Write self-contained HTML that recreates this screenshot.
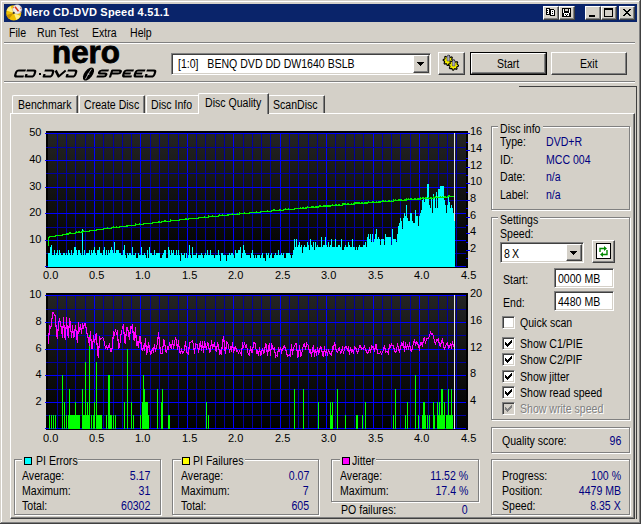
<!DOCTYPE html><html><head><meta charset="utf-8"><style>
html,body{margin:0;padding:0;width:641px;height:524px;overflow:hidden;background:#d4d0c8}
body>div,body>span,body>svg{position:absolute;box-sizing:border-box}
.t{font-family:"Liberation Sans",sans-serif;font-size:12px;line-height:13px;white-space:nowrap;color:#000;transform:scaleX(0.88);transform-origin:0 0}
.r{transform-origin:100% 0}
svg{overflow:visible}
</style></head><body>
<div style="left:0px;top:0px;width:641px;height:524px;background:#d4d0c8;"></div>
<div style="left:0px;top:0px;width:640px;height:1px;background:#d4d0c8;"></div>
<div style="left:0px;top:0px;width:1px;height:523px;background:#d4d0c8;"></div>
<div style="left:1px;top:1px;width:638px;height:1px;background:#ffffff;"></div>
<div style="left:1px;top:1px;width:1px;height:521px;background:#ffffff;"></div>
<div style="left:0px;top:523px;width:641px;height:1px;background:#404040;"></div>
<div style="left:640px;top:0px;width:1px;height:524px;background:#404040;"></div>
<div style="left:1px;top:522px;width:639px;height:1px;background:#808080;"></div>
<div style="left:639px;top:1px;width:1px;height:522px;background:#808080;"></div>
<div style="left:4px;top:4px;width:633px;height:18px;background:#0a246a;"></div>
<svg style="left:6px;top:5px" width="16" height="16" viewBox="0 0 16 16">
<circle cx="7.75" cy="7.9" r="7.6" fill="#f0c000"/>
<path d="M7.75 7.9 L0.5 5.5 A7.6 7.6 0 0 1 4.5 1 Z" fill="#fff080"/>
<path d="M7.75 7.9 L14.5 11 A7.6 7.6 0 0 1 10.5 15 Z" fill="#fff080"/>
<path d="M7.75 7.9 L3 14 A7.6 7.6 0 0 1 0.5 10 Z" fill="#c89000"/>
<circle cx="11.2" cy="4.3" r="4.6" fill="#ececec" stroke="#c0c0c0" stroke-width="0.5"/>
<path d="M9 1.8 L12.5 6.2" stroke="#e03010" stroke-width="1.5"/>
<circle cx="7.4" cy="2.6" r="0.6" fill="#e06040"/><circle cx="14.6" cy="3.2" r="0.6" fill="#e06040"/><circle cx="14.2" cy="6.8" r="0.6" fill="#e06040"/>
<circle cx="7.75" cy="7.9" r="1.1" fill="#3a3a3a"/>
</svg>
<span class="t" style="left:24px;top:6px;color:#fff;font-weight:bold;letter-spacing:0.2px;font-size:11px;transform:none">Nero CD-DVD Speed 4.51.1</span>
<div style="left:543px;top:6px;width:16px;height:14px;background:#d4d0c8;border:1px solid;border-color:#ffffff #404040 #404040 #ffffff;box-shadow:inset -1px -1px #808080;"></div>
<svg style="left:543px;top:6px" width="16" height="14" viewBox="0 0 16 14" shape-rendering="crispEdges"><path d="M3 2h4v1h1v6h-5z" fill="#000"/><rect x="4" y="3" width="2" height="5" fill="#fff"/><rect x="4" y="4" width="1" height="1" fill="#000"/><rect x="4" y="6" width="1" height="1" fill="#000"/><path d="M7 3h4v1h1v6h-5z" fill="#000"/><rect x="8" y="4" width="3" height="5" fill="#fff"/><rect x="9" y="5" width="1" height="1" fill="#000"/><rect x="9" y="7" width="1" height="1" fill="#000"/></svg>
<div style="left:559px;top:6px;width:16px;height:14px;background:#d4d0c8;border:1px solid;border-color:#ffffff #404040 #404040 #ffffff;box-shadow:inset -1px -1px #808080;"></div>
<svg style="left:559px;top:6px" width="16" height="14" viewBox="0 0 16 14" shape-rendering="crispEdges"><rect x="3" y="2" width="9" height="9" fill="#000"/><rect x="4" y="3" width="1" height="4" fill="#fff"/><rect x="10" y="3" width="1" height="4" fill="#fff"/><rect x="6" y="3" width="3" height="2" fill="#d4d0c8"/><rect x="5" y="7" width="5" height="3" fill="#fff"/><rect x="6" y="8" width="1" height="1" fill="#000"/><rect x="8" y="8" width="1" height="1" fill="#000"/><rect x="7" y="9" width="1" height="1" fill="#000"/></svg>
<div style="left:585px;top:6px;width:16px;height:14px;background:#d4d0c8;border:1px solid;border-color:#ffffff #404040 #404040 #ffffff;box-shadow:inset -1px -1px #808080;"></div>
<svg style="left:585px;top:6px" width="16" height="14" viewBox="0 0 16 14" shape-rendering="crispEdges"><rect x="4" y="9" width="6" height="2" fill="#000"/></svg>
<div style="left:601px;top:6px;width:16px;height:14px;background:#d4d0c8;border:1px solid;border-color:#ffffff #404040 #404040 #ffffff;box-shadow:inset -1px -1px #808080;"></div>
<svg style="left:601px;top:6px" width="16" height="14" viewBox="0 0 16 14" shape-rendering="crispEdges"><path d="M3 2h9v9h-9z M4 4v6h7v-6z" fill="#000" fill-rule="evenodd"/></svg>
<div style="left:619px;top:6px;width:16px;height:14px;background:#d4d0c8;border:1px solid;border-color:#ffffff #404040 #404040 #ffffff;box-shadow:inset -1px -1px #808080;"></div>
<svg style="left:619px;top:6px" width="16" height="14" viewBox="0 0 16 14" shape-rendering="crispEdges"><path d="M4 3h2v1h1v1h2v-1h1v-1h2v1h-1v1h-1v1h-1v1h1v1h1v1h1v1h-2v-1h-1v-1h-2v1h-1v1h-2v-1h1v-1h1v-1h1v-1h-1v-1h-1v-1h-1z" fill="#000"/></svg>
<span class="t" style="left:9px;top:27px;">File</span>
<span class="t" style="left:37px;top:27px;">Run Test</span>
<span class="t" style="left:92px;top:27px;">Extra</span>
<span class="t" style="left:130px;top:27px;">Help</span>
<div style="left:4px;top:42px;width:631px;height:1px;background:#808080;"></div>
<div style="left:4px;top:43px;width:631px;height:1px;background:#ffffff;"></div>
<div style="left:4px;top:81px;width:631px;height:1px;background:#808080;"></div>
<div style="left:4px;top:82px;width:631px;height:1px;background:#ffffff;"></div>
<svg style="left:0;top:0" width="641" height="100"><text x="52" y="62.6" font-family="Liberation Sans" font-weight="bold" font-size="30.5" textLength="68" lengthAdjust="spacingAndGlyphs" stroke="#000" stroke-width="0.8">nero</text></svg>
<svg style="left:0;top:0" width="641" height="100"><path transform="translate(16 69.5) skewX(-18)" d="M10 1H3Q1 1 1 3V5Q1 7 3 7H10" fill="none" stroke="#000" stroke-width="2.2" stroke-linejoin="round"/><path transform="translate(27 69.5) skewX(-18)" d="M0 1H7Q9 1 9 3V5Q9 7 7 7H1V4.5" fill="none" stroke="#000" stroke-width="2.2" stroke-linejoin="round"/><path transform="translate(45 69.5) skewX(-18)" d="M0 1H7Q9 1 9 3V5Q9 7 7 7H1V4.5" fill="none" stroke="#000" stroke-width="2.2" stroke-linejoin="round"/><path transform="translate(56 69.5) skewX(-18)" d="M0 1L5 7L10 1" fill="none" stroke="#000" stroke-width="2.2" stroke-linejoin="round"/><path transform="translate(68 69.5) skewX(-18)" d="M0 1H7Q9 1 9 3V5Q9 7 7 7H1V4.5" fill="none" stroke="#000" stroke-width="2.2" stroke-linejoin="round"/><path transform="translate(99 69.5) skewX(-18)" d="M10 1H3Q1 1 1 2.5Q1 4 3 4H7Q9 4 9 5.5Q9 7 7 7H0" fill="none" stroke="#000" stroke-width="2.2" stroke-linejoin="round"/><path transform="translate(111.5 69.5) skewX(-18)" d="M1 8V1H8Q10 1 10 2.5Q10 4 8 4H2" fill="none" stroke="#000" stroke-width="2.2" stroke-linejoin="round"/><path transform="translate(124 69.5) skewX(-18)" d="M10 1H3Q1 1 1 3V5Q1 7 3 7H10M2 4H8" fill="none" stroke="#000" stroke-width="2.2" stroke-linejoin="round"/><path transform="translate(135.5 69.5) skewX(-18)" d="M10 1H3Q1 1 1 3V5Q1 7 3 7H10M2 4H8" fill="none" stroke="#000" stroke-width="2.2" stroke-linejoin="round"/><path transform="translate(147 69.5) skewX(-18)" d="M0 1H7Q9 1 9 3V5Q9 7 7 7H1V4.5" fill="none" stroke="#000" stroke-width="2.2" stroke-linejoin="round"/><rect x="39" y="73" width="2" height="2" fill="#000"/><g transform="translate(88.5 74) rotate(-52)"><ellipse cx="0" cy="0" rx="7.5" ry="4" fill="#000"/><path d="M-6 0.8 Q0 -0.5 6 -0.8" stroke="#b0b0b0" stroke-width="0.9" fill="none"/><circle cx="0" cy="0" r="1" fill="#b0b0b0"/></g></svg>
<div style="left:171px;top:53px;width:260px;height:22px;background:#ffffff;border:1px solid;border-color:#808080 #ffffff #ffffff #808080;box-shadow:inset 1px 1px #404040, inset -1px -1px #d4d0c8;"></div>
<span class="t" style="left:178px;top:58px;">[1:0]&nbsp;&nbsp;&nbsp;BENQ DVD DD DW1640 BSLB</span>
<div style="left:413px;top:55px;width:16px;height:18px;background:#d4d0c8;border:1px solid;border-color:#ffffff #404040 #404040 #ffffff;box-shadow:inset -1px -1px #808080;"></div>
<svg style="left:413px;top:55px" width="16" height="18" shape-rendering="crispEdges"><path d="M4 7h7v1h-1v1h-1v1h-1v1h-1v-1h-1v-1h-1v-1h-1z" fill="#000"/></svg>
<div style="left:438px;top:52px;width:27px;height:23px;background:#d4d0c8;border:1px solid;border-color:#ffffff #404040 #404040 #ffffff;box-shadow:inset -1px -1px #808080;"></div>
<svg style="left:0;top:0" width="641" height="100">
<path d="M453.20,60.50 L453.10,61.48 L451.71,61.95 L451.36,62.61 L451.74,64.04 L450.98,64.66 L449.65,64.01 L448.94,64.23 L448.20,65.50 L447.22,65.40 L446.75,64.01 L446.09,63.66 L444.66,64.04 L444.04,63.28 L444.69,61.95 L444.47,61.24 L443.20,60.50 L443.30,59.52 L444.69,59.05 L445.04,58.39 L444.66,56.96 L445.42,56.34 L446.75,56.99 L447.46,56.77 L448.20,55.50 L449.18,55.60 L449.65,56.99 L450.31,57.34 L451.74,56.96 L452.36,57.72 L451.71,59.05 L451.93,59.76Z" fill="#f8f000" stroke="#000" stroke-width="1.1"/>
<path d="M458.50,65.20 L458.40,66.18 L457.01,66.65 L456.66,67.31 L457.04,68.74 L456.28,69.36 L454.95,68.71 L454.24,68.93 L453.50,70.20 L452.52,70.10 L452.05,68.71 L451.39,68.36 L449.96,68.74 L449.34,67.98 L449.99,66.65 L449.77,65.94 L448.50,65.20 L448.60,64.22 L449.99,63.75 L450.34,63.09 L449.96,61.66 L450.72,61.04 L452.05,61.69 L452.76,61.47 L453.50,60.20 L454.48,60.30 L454.95,61.69 L455.61,62.04 L457.04,61.66 L457.66,62.42 L457.01,63.75 L457.23,64.46Z" fill="#f8f000" stroke="#000" stroke-width="1.1"/>
<path d="M447 61V56.5l1.3-1.8 1.3 1.8V61z" fill="#a8a8c0" stroke="#303040" stroke-width="0.5"/>
<path d="M452.3 66V61.3l1.3-1.8 1.3 1.8V66z" fill="#a8a8c0" stroke="#303040" stroke-width="0.5"/>
</svg>
<div style="left:470px;top:52px;width:77px;height:23px;border:1px solid #000"></div>
<div style="left:471px;top:53px;width:75px;height:21px;background:#d4d0c8;border:1px solid;border-color:#ffffff #404040 #404040 #ffffff;box-shadow:inset -1px -1px #808080;"></div>
<span class="t" style="left:497px;top:58px;">Start</span>
<div style="left:551px;top:52px;width:76px;height:23px;background:#d4d0c8;border:1px solid;border-color:#ffffff #404040 #404040 #ffffff;box-shadow:inset -1px -1px #808080;"></div>
<span class="t" style="left:580px;top:58px;">Exit</span>
<div style="left:519px;top:86px;width:118px;height:1px;background:#404040;"></div>
<div style="left:636px;top:86px;width:1px;height:433px;background:#404040;"></div>
<div style="left:10px;top:113px;width:625px;height:406px;background:#d4d0c8;border:1px solid;border-color:#ffffff #404040 #404040 #ffffff;box-shadow:inset -1px -1px #808080;"></div>
<div style="left:12px;top:95px;width:66px;height:18px;background:#d4d0c8;border-left:1px solid #ffffff;border-top:1px solid #ffffff;border-right:1px solid #404040;box-shadow:inset -1px 0 #808080;border-top-left-radius:2px;border-top-right-radius:1px"></div>
<span class="t" style="left:18px;top:99px;">Benchmark</span>
<div style="left:79px;top:95px;width:66px;height:18px;background:#d4d0c8;border-left:1px solid #ffffff;border-top:1px solid #ffffff;border-right:1px solid #404040;box-shadow:inset -1px 0 #808080;border-top-left-radius:2px;border-top-right-radius:1px"></div>
<span class="t" style="left:84px;top:99px;">Create Disc</span>
<div style="left:146px;top:95px;width:54px;height:18px;background:#d4d0c8;border-left:1px solid #ffffff;border-top:1px solid #ffffff;border-right:1px solid #404040;box-shadow:inset -1px 0 #808080;border-top-left-radius:2px;border-top-right-radius:1px"></div>
<span class="t" style="left:151px;top:99px;">Disc Info</span>
<div style="left:268px;top:95px;width:57px;height:18px;background:#d4d0c8;border-left:1px solid #ffffff;border-top:1px solid #ffffff;border-right:1px solid #404040;box-shadow:inset -1px 0 #808080;border-top-left-radius:2px;border-top-right-radius:1px"></div>
<span class="t" style="left:273px;top:99px;">ScanDisc</span>
<div style="left:198px;top:93px;width:71px;height:21px;background:#d4d0c8;border-left:1px solid #ffffff;border-top:1px solid #ffffff;border-right:1px solid #404040;box-shadow:inset -1px 0 #808080;border-top-left-radius:2px;border-top-right-radius:1px"></div>
<span class="t" style="left:205px;top:97px;">Disc Quality</span>
<svg style="left:0;top:0" width="641" height="524" shape-rendering="crispEdges"><defs><linearGradient id="bg" x1="0" y1="0" x2="0" y2="1"><stop offset="0" stop-color="#242424"/><stop offset="0.5" stop-color="#101010"/><stop offset="1" stop-color="#000"/></linearGradient></defs><rect x="46" y="131" width="422" height="137" fill="#000"/><rect x="48" y="133" width="418" height="134" fill="url(#bg)"/><rect x="57" y="133" width="1" height="134" fill="#0000a0"/><rect x="66" y="133" width="1" height="134" fill="#0000a0"/><rect x="75" y="133" width="1" height="134" fill="#0000a0"/><rect x="85" y="133" width="1" height="134" fill="#0000a0"/><rect x="94" y="133" width="1" height="134" fill="#0000ff"/><rect x="103" y="133" width="1" height="134" fill="#0000a0"/><rect x="113" y="133" width="1" height="134" fill="#0000a0"/><rect x="122" y="133" width="1" height="134" fill="#0000a0"/><rect x="131" y="133" width="1" height="134" fill="#0000a0"/><rect x="140" y="133" width="1" height="134" fill="#0000ff"/><rect x="150" y="133" width="1" height="134" fill="#0000a0"/><rect x="159" y="133" width="1" height="134" fill="#0000a0"/><rect x="168" y="133" width="1" height="134" fill="#0000a0"/><rect x="178" y="133" width="1" height="134" fill="#0000a0"/><rect x="187" y="133" width="1" height="134" fill="#0000ff"/><rect x="196" y="133" width="1" height="134" fill="#0000a0"/><rect x="205" y="133" width="1" height="134" fill="#0000a0"/><rect x="215" y="133" width="1" height="134" fill="#0000a0"/><rect x="224" y="133" width="1" height="134" fill="#0000a0"/><rect x="233" y="133" width="1" height="134" fill="#0000ff"/><rect x="243" y="133" width="1" height="134" fill="#0000a0"/><rect x="252" y="133" width="1" height="134" fill="#0000a0"/><rect x="261" y="133" width="1" height="134" fill="#0000a0"/><rect x="270" y="133" width="1" height="134" fill="#0000a0"/><rect x="280" y="133" width="1" height="134" fill="#0000ff"/><rect x="289" y="133" width="1" height="134" fill="#0000a0"/><rect x="298" y="133" width="1" height="134" fill="#0000a0"/><rect x="308" y="133" width="1" height="134" fill="#0000a0"/><rect x="317" y="133" width="1" height="134" fill="#0000a0"/><rect x="326" y="133" width="1" height="134" fill="#0000ff"/><rect x="335" y="133" width="1" height="134" fill="#0000a0"/><rect x="345" y="133" width="1" height="134" fill="#0000a0"/><rect x="354" y="133" width="1" height="134" fill="#0000a0"/><rect x="363" y="133" width="1" height="134" fill="#0000a0"/><rect x="373" y="133" width="1" height="134" fill="#0000ff"/><rect x="382" y="133" width="1" height="134" fill="#0000a0"/><rect x="391" y="133" width="1" height="134" fill="#0000a0"/><rect x="400" y="133" width="1" height="134" fill="#0000a0"/><rect x="410" y="133" width="1" height="134" fill="#0000a0"/><rect x="419" y="133" width="1" height="134" fill="#0000ff"/><rect x="428" y="133" width="1" height="134" fill="#0000a0"/><rect x="438" y="133" width="1" height="134" fill="#0000a0"/><rect x="447" y="133" width="1" height="134" fill="#0000a0"/><rect x="456" y="133" width="1" height="134" fill="#0000a0"/><rect x="45" y="266" width="421" height="1" fill="#0000ff"/><rect x="46" y="253" width="420" height="1" fill="#0000a0"/><rect x="45" y="240" width="421" height="1" fill="#0000ff"/><rect x="46" y="227" width="420" height="1" fill="#0000a0"/><rect x="45" y="213" width="421" height="1" fill="#0000ff"/><rect x="46" y="200" width="420" height="1" fill="#0000a0"/><rect x="45" y="187" width="421" height="1" fill="#0000ff"/><rect x="46" y="173" width="420" height="1" fill="#0000a0"/><rect x="45" y="160" width="421" height="1" fill="#0000ff"/><rect x="46" y="147" width="420" height="1" fill="#0000a0"/><rect x="45" y="133" width="421" height="1" fill="#0000ff"/><rect x="466" y="258" width="2" height="1" fill="#0000ff"/><rect x="466" y="250" width="4" height="1" fill="#0000ff"/><rect x="466" y="242" width="2" height="1" fill="#0000ff"/><rect x="466" y="233" width="4" height="1" fill="#0000ff"/><rect x="466" y="225" width="2" height="1" fill="#0000ff"/><rect x="466" y="217" width="4" height="1" fill="#0000ff"/><rect x="466" y="208" width="2" height="1" fill="#0000ff"/><rect x="466" y="200" width="4" height="1" fill="#0000ff"/><rect x="466" y="192" width="2" height="1" fill="#0000ff"/><rect x="466" y="183" width="4" height="1" fill="#0000ff"/><rect x="466" y="175" width="2" height="1" fill="#0000ff"/><rect x="466" y="167" width="4" height="1" fill="#0000ff"/><rect x="466" y="158" width="2" height="1" fill="#0000ff"/><rect x="466" y="150" width="4" height="1" fill="#0000ff"/><rect x="466" y="142" width="2" height="1" fill="#0000ff"/><rect x="466" y="133" width="4" height="1" fill="#0000ff"/><rect x="454" y="133" width="1" height="134" fill="#e8e8e8"/><path d="M48 252.7V267h1V252.7zM49 252.7V267h1V252.7zM50 247.4V267h1V247.4zM51 244.7V267h1V244.7zM52 255.4V267h1V255.4zM53 255.4V267h1V255.4zM54 250.0V267h1V250.0zM55 255.4V267h1V255.4zM56 252.7V267h1V252.7zM57 250.0V267h1V250.0zM58 255.4V267h1V255.4zM59 250.0V267h1V250.0zM60 252.7V267h1V252.7zM61 255.4V267h1V255.4zM62 255.4V267h1V255.4zM63 252.7V267h1V252.7zM64 252.7V267h1V252.7zM65 255.4V267h1V255.4zM66 252.7V267h1V252.7zM67 255.4V267h1V255.4zM68 250.0V267h1V250.0zM69 252.7V267h1V252.7zM70 255.4V267h1V255.4zM71 250.0V267h1V250.0zM72 255.4V267h1V255.4zM73 252.7V267h1V252.7zM74 247.4V267h1V247.4zM75 247.4V267h1V247.4zM76 250.0V267h1V250.0zM77 255.4V267h1V255.4zM78 250.0V267h1V250.0zM79 250.0V267h1V250.0zM80 252.7V267h1V252.7zM81 255.4V267h1V255.4zM82 228.8V267h1V228.8zM83 255.4V267h1V255.4zM84 250.0V267h1V250.0zM85 255.4V267h1V255.4zM86 252.7V267h1V252.7zM87 252.7V267h1V252.7zM88 252.7V267h1V252.7zM89 250.0V267h1V250.0zM90 255.4V267h1V255.4zM91 250.0V267h1V250.0zM92 252.7V267h1V252.7zM93 250.0V267h1V250.0zM94 247.4V267h1V247.4zM95 252.7V267h1V252.7zM96 255.4V267h1V255.4zM97 250.0V267h1V250.0zM98 250.0V267h1V250.0zM99 247.4V267h1V247.4zM100 252.7V267h1V252.7zM101 252.7V267h1V252.7zM102 255.4V267h1V255.4zM103 250.0V267h1V250.0zM104 247.4V267h1V247.4zM105 255.4V267h1V255.4zM106 250.0V267h1V250.0zM107 255.4V267h1V255.4zM108 250.0V267h1V250.0zM109 252.7V267h1V252.7zM110 250.0V267h1V250.0zM111 247.4V267h1V247.4zM112 250.0V267h1V250.0zM113 252.7V267h1V252.7zM114 242.1V267h1V242.1zM115 252.7V267h1V252.7zM116 250.0V267h1V250.0zM117 250.0V267h1V250.0zM118 250.0V267h1V250.0zM119 252.7V267h1V252.7zM120 252.7V267h1V252.7zM121 255.4V267h1V255.4zM122 255.4V267h1V255.4zM123 250.0V267h1V250.0zM124 244.7V267h1V244.7zM125 255.4V267h1V255.4zM126 258.0V267h1V258.0zM127 252.7V267h1V252.7zM128 255.4V267h1V255.4zM129 252.7V267h1V252.7zM130 252.7V267h1V252.7zM131 255.4V267h1V255.4zM132 247.4V267h1V247.4zM133 255.4V267h1V255.4zM134 255.4V267h1V255.4zM135 252.7V267h1V252.7zM136 258.0V267h1V258.0zM137 258.0V267h1V258.0zM138 252.7V267h1V252.7zM139 255.4V267h1V255.4zM140 255.4V267h1V255.4zM141 247.4V267h1V247.4zM142 255.4V267h1V255.4zM143 255.4V267h1V255.4zM144 252.7V267h1V252.7zM145 255.4V267h1V255.4zM146 258.0V267h1V258.0zM147 250.0V267h1V250.0zM148 258.0V267h1V258.0zM149 247.4V267h1V247.4zM150 252.7V267h1V252.7zM151 252.7V267h1V252.7zM152 255.4V267h1V255.4zM153 255.4V267h1V255.4zM154 250.0V267h1V250.0zM155 255.4V267h1V255.4zM156 252.7V267h1V252.7zM157 252.7V267h1V252.7zM158 252.7V267h1V252.7zM159 252.7V267h1V252.7zM160 258.0V267h1V258.0zM161 258.0V267h1V258.0zM162 255.4V267h1V255.4zM163 252.7V267h1V252.7zM164 250.0V267h1V250.0zM165 250.0V267h1V250.0zM166 258.0V267h1V258.0zM167 258.0V267h1V258.0zM168 247.4V267h1V247.4zM169 250.0V267h1V250.0zM170 255.4V267h1V255.4zM171 250.0V267h1V250.0zM172 252.7V267h1V252.7zM173 250.0V267h1V250.0zM174 255.4V267h1V255.4zM175 255.4V267h1V255.4zM176 250.0V267h1V250.0zM177 255.4V267h1V255.4zM178 250.0V267h1V250.0zM179 255.4V267h1V255.4zM180 260.7V267h1V260.7zM181 252.7V267h1V252.7zM182 255.4V267h1V255.4zM183 255.4V267h1V255.4zM184 252.7V267h1V252.7zM185 258.0V267h1V258.0zM186 252.7V267h1V252.7zM187 258.0V267h1V258.0zM188 255.4V267h1V255.4zM189 244.7V267h1V244.7zM190 255.4V267h1V255.4zM191 258.0V267h1V258.0zM192 247.4V267h1V247.4zM193 255.4V267h1V255.4zM194 255.4V267h1V255.4zM195 255.4V267h1V255.4zM196 252.7V267h1V252.7zM197 258.0V267h1V258.0zM198 255.4V267h1V255.4zM199 255.4V267h1V255.4zM200 255.4V267h1V255.4zM201 252.7V267h1V252.7zM202 255.4V267h1V255.4zM203 258.0V267h1V258.0zM204 255.4V267h1V255.4zM205 252.7V267h1V252.7zM206 255.4V267h1V255.4zM207 250.0V267h1V250.0zM208 255.4V267h1V255.4zM209 255.4V267h1V255.4zM210 250.0V267h1V250.0zM211 255.4V267h1V255.4zM212 255.4V267h1V255.4zM213 255.4V267h1V255.4zM214 258.0V267h1V258.0zM215 255.4V267h1V255.4zM216 255.4V267h1V255.4zM217 255.4V267h1V255.4zM218 250.0V267h1V250.0zM219 255.4V267h1V255.4zM220 260.7V267h1V260.7zM221 252.7V267h1V252.7zM222 252.7V267h1V252.7zM223 255.4V267h1V255.4zM224 255.4V267h1V255.4zM225 255.4V267h1V255.4zM226 260.7V267h1V260.7zM227 255.4V267h1V255.4zM228 255.4V267h1V255.4zM229 252.7V267h1V252.7zM230 255.4V267h1V255.4zM231 252.7V267h1V252.7zM232 252.7V267h1V252.7zM233 255.4V267h1V255.4zM234 258.0V267h1V258.0zM235 250.0V267h1V250.0zM236 252.7V267h1V252.7zM237 252.7V267h1V252.7zM238 250.0V267h1V250.0zM239 250.0V267h1V250.0zM240 247.4V267h1V247.4zM241 258.0V267h1V258.0zM242 252.7V267h1V252.7zM243 244.7V267h1V244.7zM244 250.0V267h1V250.0zM245 252.7V267h1V252.7zM246 255.4V267h1V255.4zM247 255.4V267h1V255.4zM248 255.4V267h1V255.4zM249 255.4V267h1V255.4zM250 258.0V267h1V258.0zM251 252.7V267h1V252.7zM252 250.0V267h1V250.0zM253 255.4V267h1V255.4zM254 258.0V267h1V258.0zM255 255.4V267h1V255.4zM256 258.0V267h1V258.0zM257 255.4V267h1V255.4zM258 255.4V267h1V255.4zM259 255.4V267h1V255.4zM260 258.0V267h1V258.0zM261 255.4V267h1V255.4zM262 252.7V267h1V252.7zM263 258.0V267h1V258.0zM264 258.0V267h1V258.0zM265 260.7V267h1V260.7zM266 252.7V267h1V252.7zM267 255.4V267h1V255.4zM268 252.7V267h1V252.7zM269 258.0V267h1V258.0zM270 255.4V267h1V255.4zM271 252.7V267h1V252.7zM272 258.0V267h1V258.0zM273 258.0V267h1V258.0zM274 255.4V267h1V255.4zM275 252.7V267h1V252.7zM276 255.4V267h1V255.4zM277 255.4V267h1V255.4zM278 250.0V267h1V250.0zM279 255.4V267h1V255.4zM280 255.4V267h1V255.4zM281 252.7V267h1V252.7zM282 255.4V267h1V255.4zM283 252.7V267h1V252.7zM284 258.0V267h1V258.0zM285 258.0V267h1V258.0zM286 252.7V267h1V252.7zM287 252.7V267h1V252.7zM288 252.7V267h1V252.7zM289 252.7V267h1V252.7zM290 255.4V267h1V255.4zM291 258.0V267h1V258.0zM292 255.4V267h1V255.4zM293 250.0V267h1V250.0zM294 239.4V267h1V239.4zM295 247.4V267h1V247.4zM296 239.4V267h1V239.4zM297 247.4V267h1V247.4zM298 244.7V267h1V244.7zM299 242.1V267h1V242.1zM300 247.4V267h1V247.4zM301 244.7V267h1V244.7zM302 252.7V267h1V252.7zM303 247.4V267h1V247.4zM304 244.7V267h1V244.7zM305 247.4V267h1V247.4zM306 247.4V267h1V247.4zM307 242.1V267h1V242.1zM308 244.7V267h1V244.7zM309 250.0V267h1V250.0zM310 239.4V267h1V239.4zM311 244.7V267h1V244.7zM312 247.4V267h1V247.4zM313 242.1V267h1V242.1zM314 250.0V267h1V250.0zM315 242.1V267h1V242.1zM316 247.4V267h1V247.4zM317 244.7V267h1V244.7zM318 247.4V267h1V247.4zM319 247.4V267h1V247.4zM320 247.4V267h1V247.4zM321 236.7V267h1V236.7zM322 247.4V267h1V247.4zM323 244.7V267h1V244.7zM324 244.7V267h1V244.7zM325 236.7V267h1V236.7zM326 244.7V267h1V244.7zM327 247.4V267h1V247.4zM328 242.1V267h1V242.1zM329 247.4V267h1V247.4zM330 244.7V267h1V244.7zM331 239.4V267h1V239.4zM332 247.4V267h1V247.4zM333 247.4V267h1V247.4zM334 247.4V267h1V247.4zM335 239.4V267h1V239.4zM336 247.4V267h1V247.4zM337 247.4V267h1V247.4zM338 244.7V267h1V244.7zM339 244.7V267h1V244.7zM340 247.4V267h1V247.4zM341 239.4V267h1V239.4zM342 250.0V267h1V250.0zM343 250.0V267h1V250.0zM344 247.4V267h1V247.4zM345 244.7V267h1V244.7zM346 247.4V267h1V247.4zM347 247.4V267h1V247.4zM348 242.1V267h1V242.1zM349 244.7V267h1V244.7zM350 247.4V267h1V247.4zM351 247.4V267h1V247.4zM352 239.4V267h1V239.4zM353 247.4V267h1V247.4zM354 247.4V267h1V247.4zM355 250.0V267h1V250.0zM356 247.4V267h1V247.4zM357 250.0V267h1V250.0zM358 247.4V267h1V247.4zM359 244.7V267h1V244.7zM360 247.4V267h1V247.4zM361 247.4V267h1V247.4zM362 247.4V267h1V247.4zM363 244.7V267h1V244.7zM364 244.7V267h1V244.7zM365 242.1V267h1V242.1zM366 247.4V267h1V247.4zM367 236.7V267h1V236.7zM368 234.1V267h1V234.1zM369 239.4V267h1V239.4zM370 234.1V267h1V234.1zM371 242.1V267h1V242.1zM372 234.1V267h1V234.1zM373 242.1V267h1V242.1zM374 239.4V267h1V239.4zM375 234.1V267h1V234.1zM376 228.8V267h1V228.8zM377 239.4V267h1V239.4zM378 236.7V267h1V236.7zM379 239.4V267h1V239.4zM380 244.7V267h1V244.7zM381 239.4V267h1V239.4zM382 239.4V267h1V239.4zM383 239.4V267h1V239.4zM384 244.7V267h1V244.7zM385 234.1V267h1V234.1zM386 236.7V267h1V236.7zM387 236.7V267h1V236.7zM388 236.7V267h1V236.7zM389 236.7V267h1V236.7zM390 236.7V267h1V236.7zM391 244.7V267h1V244.7zM392 228.8V267h1V228.8zM393 239.4V267h1V239.4zM394 239.4V267h1V239.4zM395 239.4V267h1V239.4zM396 242.1V267h1V242.1zM397 234.1V267h1V234.1zM398 226.1V267h1V226.1zM399 223.4V267h1V223.4zM400 218.1V267h1V218.1zM401 220.8V267h1V220.8zM402 228.8V267h1V228.8zM403 218.1V267h1V218.1zM404 212.8V267h1V212.8zM405 215.5V267h1V215.5zM406 204.8V267h1V204.8zM407 218.1V267h1V218.1zM408 220.8V267h1V220.8zM409 220.8V267h1V220.8zM410 212.8V267h1V212.8zM411 212.8V267h1V212.8zM412 220.8V267h1V220.8zM413 223.4V267h1V223.4zM414 223.4V267h1V223.4zM415 210.1V267h1V210.1zM416 215.5V267h1V215.5zM417 215.5V267h1V215.5zM418 226.1V267h1V226.1zM419 215.5V267h1V215.5zM420 212.8V267h1V212.8zM421 210.1V267h1V210.1zM422 199.5V267h1V199.5zM423 196.8V267h1V196.8zM424 202.2V267h1V202.2zM425 196.8V267h1V196.8zM426 196.8V267h1V196.8zM427 183.5V267h1V183.5zM428 183.5V267h1V183.5zM429 204.8V267h1V204.8zM430 207.5V267h1V207.5zM431 196.8V267h1V196.8zM432 212.8V267h1V212.8zM433 194.2V267h1V194.2zM434 196.8V267h1V196.8zM435 207.5V267h1V207.5zM436 191.5V267h1V191.5zM437 207.5V267h1V207.5zM438 188.9V267h1V188.9zM439 188.9V267h1V188.9zM440 186.2V267h1V186.2zM441 186.2V267h1V186.2zM442 186.2V267h1V186.2zM443 186.2V267h1V186.2zM444 199.5V267h1V199.5zM445 204.8V267h1V204.8zM446 212.8V267h1V212.8zM447 204.8V267h1V204.8zM448 196.8V267h1V196.8zM449 202.2V267h1V202.2zM450 207.5V267h1V207.5zM451 204.8V267h1V204.8zM452 207.5V267h1V207.5zM453 212.8V267h1V212.8zM454 220.8V267h1V220.8z" fill="#00ffff"/><polyline fill="none" stroke="#00f000" stroke-width="1" points="48.5,245.5 48.5,237.5 49.5,237.5 49.5,236.5 55.5,236.5 55.5,235.5 62.5,235.5 62.5,234.5 68.5,234.5 68.5,233.5 75.5,233.5 75.5,232.5 82.5,232.5 82.5,231.5 89.5,231.5 89.5,230.5 96.5,230.5 96.5,229.5 103.5,229.5 103.5,228.5 111.5,228.5 111.5,227.5 119.5,227.5 119.5,226.5 127.5,226.5 127.5,225.5 135.5,225.5 135.5,224.5 143.5,224.5 143.5,223.5 152.5,223.5 152.5,222.5 161.5,222.5 161.5,221.5 170.5,221.5 170.5,220.5 179.5,220.5 179.5,219.5 188.5,219.5 188.5,218.5 198.5,218.5 198.5,217.5 208.5,217.5 208.5,216.5 218.5,216.5 218.5,215.5 228.5,215.5 228.5,214.5 239.5,214.5 239.5,213.5 249.5,213.5 249.5,212.5 260.5,212.5 260.5,211.5 271.5,211.5 271.5,210.5 283.5,210.5 283.5,209.5 294.5,209.5 294.5,208.5 306.5,208.5 306.5,207.5 318.5,207.5 318.5,206.5 330.5,206.5 330.5,205.5 342.5,205.5 342.5,204.5 354.5,204.5 354.5,203.5 367.5,203.5 367.5,202.5 380.5,202.5 380.5,201.5 393.5,201.5 393.5,200.5 406.5,200.5 406.5,199.5 420.5,199.5 420.5,198.5 433.5,198.5 433.5,197.5 447.5,197.5 447.5,196.5 453.5,196.5"/><path d="M66 233h1v1h-1zM67 233h1v1h-1zM69 232h1v1h-1zM70 232h1v1h-1zM76 231h1v1h-1zM78 231h1v1h-1zM79 231h1v1h-1zM81 231h1v1h-1zM83 230h1v1h-1zM107 227h1v1h-1zM113 226h1v1h-1zM116 226h1v1h-1zM126 225h1v1h-1zM135 223h1v1h-1zM139 223h1v1h-1zM158 221h1v1h-1zM159 221h1v1h-1zM164 220h1v1h-1zM165 220h1v1h-1zM170 219h1v1h-1zM185 218h1v1h-1zM186 218h1v1h-1zM204 216h1v1h-1zM208 215h1v1h-1zM212 215h1v1h-1zM219 214h1v1h-1zM222 214h1v1h-1zM227 214h1v1h-1zM232 213h1v1h-1zM237 213h1v1h-1zM239 212h1v1h-1zM244 212h1v1h-1zM256 211h1v1h-1zM267 210h1v1h-1zM273 209h1v1h-1zM274 209h1v1h-1zM279 209h1v1h-1zM280 209h1v1h-1zM285 208h1v1h-1zM288 208h1v1h-1zM300 207h1v1h-1zM302 207h1v1h-1zM303 207h1v1h-1zM305 207h1v1h-1zM307 206h1v1h-1zM311 206h1v1h-1zM312 206h1v1h-1zM313 206h1v1h-1zM315 206h1v1h-1zM316 206h1v1h-1zM317 206h1v1h-1zM319 205h1v1h-1zM320 205h1v1h-1zM323 205h1v1h-1zM324 205h1v1h-1zM325 205h1v1h-1zM326 205h1v1h-1zM327 205h1v1h-1zM328 205h1v1h-1zM329 205h1v1h-1zM332 204h1v1h-1zM335 204h1v1h-1zM336 204h1v1h-1zM338 204h1v1h-1zM339 204h1v1h-1zM342 203h1v1h-1zM343 203h1v1h-1zM344 203h1v1h-1zM345 203h1v1h-1zM347 203h1v1h-1zM348 203h1v1h-1zM351 203h1v1h-1zM353 203h1v1h-1zM354 202h1v1h-1zM355 202h1v1h-1zM356 202h1v1h-1zM357 202h1v1h-1zM358 202h1v1h-1zM359 202h1v1h-1zM361 202h1v1h-1zM362 202h1v1h-1zM364 202h1v1h-1zM365 202h1v1h-1zM366 202h1v1h-1zM368 201h1v1h-1zM372 201h1v1h-1zM373 201h1v1h-1zM376 201h1v1h-1zM378 201h1v1h-1zM379 201h1v1h-1zM382 200h1v1h-1zM383 200h1v1h-1zM385 200h1v1h-1zM388 200h1v1h-1zM389 200h1v1h-1zM391 200h1v1h-1zM393 199h1v1h-1zM395 199h1v1h-1zM398 199h1v1h-1zM399 199h1v1h-1zM400 199h1v1h-1zM401 199h1v1h-1zM404 199h1v1h-1zM405 199h1v1h-1zM406 198h1v1h-1zM408 198h1v1h-1zM410 198h1v1h-1zM411 198h1v1h-1zM414 198h1v1h-1zM415 198h1v1h-1zM417 198h1v1h-1zM418 198h1v1h-1zM419 198h1v1h-1zM420 197h1v1h-1zM422 197h1v1h-1zM423 197h1v1h-1zM425 197h1v1h-1zM426 197h1v1h-1zM428 197h1v1h-1zM430 197h1v1h-1zM431 197h1v1h-1zM433 196h1v1h-1zM435 196h1v1h-1zM437 196h1v1h-1zM440 196h1v1h-1zM442 196h1v1h-1zM444 196h1v1h-1zM445 196h1v1h-1zM448 195h1v1h-1zM449 195h1v1h-1z" fill="#00f000"/><rect x="46" y="293" width="422" height="137" fill="#000"/><rect x="48" y="295" width="418" height="134" fill="url(#bg)"/><rect x="57" y="295" width="1" height="134" fill="#0000a0"/><rect x="66" y="295" width="1" height="134" fill="#0000a0"/><rect x="75" y="295" width="1" height="134" fill="#0000a0"/><rect x="85" y="295" width="1" height="134" fill="#0000a0"/><rect x="94" y="295" width="1" height="134" fill="#0000ff"/><rect x="103" y="295" width="1" height="134" fill="#0000a0"/><rect x="113" y="295" width="1" height="134" fill="#0000a0"/><rect x="122" y="295" width="1" height="134" fill="#0000a0"/><rect x="131" y="295" width="1" height="134" fill="#0000a0"/><rect x="140" y="295" width="1" height="134" fill="#0000ff"/><rect x="150" y="295" width="1" height="134" fill="#0000a0"/><rect x="159" y="295" width="1" height="134" fill="#0000a0"/><rect x="168" y="295" width="1" height="134" fill="#0000a0"/><rect x="178" y="295" width="1" height="134" fill="#0000a0"/><rect x="187" y="295" width="1" height="134" fill="#0000ff"/><rect x="196" y="295" width="1" height="134" fill="#0000a0"/><rect x="205" y="295" width="1" height="134" fill="#0000a0"/><rect x="215" y="295" width="1" height="134" fill="#0000a0"/><rect x="224" y="295" width="1" height="134" fill="#0000a0"/><rect x="233" y="295" width="1" height="134" fill="#0000ff"/><rect x="243" y="295" width="1" height="134" fill="#0000a0"/><rect x="252" y="295" width="1" height="134" fill="#0000a0"/><rect x="261" y="295" width="1" height="134" fill="#0000a0"/><rect x="270" y="295" width="1" height="134" fill="#0000a0"/><rect x="280" y="295" width="1" height="134" fill="#0000ff"/><rect x="289" y="295" width="1" height="134" fill="#0000a0"/><rect x="298" y="295" width="1" height="134" fill="#0000a0"/><rect x="308" y="295" width="1" height="134" fill="#0000a0"/><rect x="317" y="295" width="1" height="134" fill="#0000a0"/><rect x="326" y="295" width="1" height="134" fill="#0000ff"/><rect x="335" y="295" width="1" height="134" fill="#0000a0"/><rect x="345" y="295" width="1" height="134" fill="#0000a0"/><rect x="354" y="295" width="1" height="134" fill="#0000a0"/><rect x="363" y="295" width="1" height="134" fill="#0000a0"/><rect x="373" y="295" width="1" height="134" fill="#0000ff"/><rect x="382" y="295" width="1" height="134" fill="#0000a0"/><rect x="391" y="295" width="1" height="134" fill="#0000a0"/><rect x="400" y="295" width="1" height="134" fill="#0000a0"/><rect x="410" y="295" width="1" height="134" fill="#0000a0"/><rect x="419" y="295" width="1" height="134" fill="#0000ff"/><rect x="428" y="295" width="1" height="134" fill="#0000a0"/><rect x="438" y="295" width="1" height="134" fill="#0000a0"/><rect x="447" y="295" width="1" height="134" fill="#0000a0"/><rect x="456" y="295" width="1" height="134" fill="#0000a0"/><rect x="45" y="428" width="421" height="1" fill="#0000ff"/><rect x="46" y="415" width="420" height="1" fill="#0000a0"/><rect x="45" y="402" width="421" height="1" fill="#0000ff"/><rect x="46" y="389" width="420" height="1" fill="#0000a0"/><rect x="45" y="375" width="421" height="1" fill="#0000ff"/><rect x="46" y="362" width="420" height="1" fill="#0000a0"/><rect x="45" y="349" width="421" height="1" fill="#0000ff"/><rect x="46" y="335" width="420" height="1" fill="#0000a0"/><rect x="45" y="322" width="421" height="1" fill="#0000ff"/><rect x="46" y="309" width="420" height="1" fill="#0000a0"/><rect x="45" y="295" width="421" height="1" fill="#0000ff"/><path d="M49 415V429h1V415zM51 415V429h1V415zM53 415V429h1V415zM55 415V429h1V415zM62 375V429h1V375zM64 402V429h1V402zM66 415V429h1V415zM68 415V429h1V415zM69 389V429h1V389zM70 415V429h1V415zM71 415V429h1V415zM72 415V429h1V415zM73 415V429h1V415zM74 415V429h1V415zM75 402V429h1V402zM76 415V429h1V415zM77 415V429h1V415zM78 415V429h1V415zM79 415V429h1V415zM82 389V429h1V389zM83 415V429h1V415zM84 415V429h1V415zM85 362V429h1V362zM86 415V429h1V415zM87 402V429h1V402zM88 415V429h1V415zM89 335V429h1V335zM91 415V429h1V415zM93 415V429h1V415zM94 402V429h1V402zM96 362V429h1V362zM97 415V429h1V415zM98 415V429h1V415zM99 415V429h1V415zM100 415V429h1V415zM101 415V429h1V415zM106 415V429h1V415zM108 375V429h1V375zM109 375V429h1V375zM110 415V429h1V415zM111 415V429h1V415zM113 415V429h1V415zM115 415V429h1V415zM124 402V429h1V402zM127 349V429h1V349zM131 402V429h1V402zM133 415V429h1V415zM140 415V429h1V415zM142 402V429h1V402zM143 375V429h1V375zM144 389V429h1V389zM145 402V429h1V402zM146 402V429h1V402zM147 402V429h1V402zM148 415V429h1V415zM157 389V429h1V389zM161 402V429h1V402zM162 389V429h1V389zM168 415V429h1V415zM169 415V429h1V415zM206 402V429h1V402zM208 415V429h1V415zM294 389V429h1V389zM303 389V429h1V389zM318 402V429h1V402zM330 402V429h1V402zM331 415V429h1V415zM332 402V429h1V402zM337 389V429h1V389zM345 415V429h1V415zM356 415V429h1V415zM357 415V429h1V415zM362 415V429h1V415zM365 402V429h1V402zM393 415V429h1V415zM395 389V429h1V389zM405 415V429h1V415zM407 402V429h1V402zM415 375V429h1V375zM418 415V429h1V415zM422 415V429h1V415zM423 402V429h1V402zM424 402V429h1V402zM425 415V429h1V415zM427 415V429h1V415zM429 415V429h1V415zM433 402V429h1V402zM434 415V429h1V415zM437 402V429h1V402zM438 415V429h1V415zM439 402V429h1V402zM440 415V429h1V415zM441 389V429h1V389zM442 389V429h1V389zM443 415V429h1V415zM444 402V429h1V402zM446 415V429h1V415zM447 415V429h1V415zM448 389V429h1V389zM449 415V429h1V415zM450 415V429h1V415zM451 389V429h1V389zM452 415V429h1V415z" fill="#00ff00"/><polyline fill="none" stroke="#ff00ff" stroke-width="1.1" points="48.5,343.7 49.5,325.5 50.5,328.0 51.5,325.4 52.5,312.3 53.5,312.3 54.5,315.4 55.5,315.4 56.5,335.7 57.5,337.5 58.5,323.0 59.5,319.8 60.5,322.3 61.5,330.0 62.5,337.7 63.5,316.7 64.5,335.1 65.5,340.2 66.5,316.6 67.5,334.7 68.5,336.6 69.5,317.6 70.5,324.4 71.5,338.3 72.5,325.0 73.5,338.2 74.5,335.3 75.5,324.7 76.5,336.0 77.5,343.3 78.5,322.5 79.5,332.4 80.5,324.5 81.5,334.4 82.5,322.7 83.5,328.5 84.5,323.1 85.5,323.1 86.5,330.9 87.5,335.7 88.5,339.5 89.5,345.6 90.5,331.2 91.5,348.6 92.5,348.4 93.5,335.1 94.5,343.3 95.5,336.3 96.5,333.1 97.5,355.0 98.5,356.8 99.5,337.1 100.5,339.0 101.5,338.4 102.5,337.4 103.5,338.9 104.5,342.5 105.5,349.3 106.5,344.9 107.5,349.9 108.5,346.1 109.5,344.0 110.5,351.7 111.5,351.2 112.5,345.4 113.5,330.7 114.5,333.8 115.5,330.5 116.5,333.5 117.5,331.6 118.5,348.1 119.5,347.0 120.5,339.4 121.5,330.3 122.5,329.5 123.5,324.0 124.5,341.4 125.5,343.6 126.5,327.3 127.5,328.1 128.5,332.8 129.5,339.9 130.5,326.6 131.5,327.8 132.5,324.3 133.5,339.7 134.5,340.3 135.5,326.6 136.5,346.1 137.5,343.2 138.5,348.2 139.5,336.3 140.5,336.7 141.5,349.0 142.5,349.9 143.5,346.8 144.5,351.2 145.5,337.6 146.5,354.7 147.5,351.9 148.5,342.4 149.5,347.7 150.5,355.0 151.5,351.9 152.5,349.6 153.5,351.7 154.5,343.8 155.5,352.1 156.5,345.9 157.5,343.9 158.5,332.1 159.5,342.5 160.5,353.5 161.5,353.4 162.5,353.5 163.5,340.2 164.5,341.3 165.5,349.5 166.5,353.2 167.5,347.0 168.5,349.0 169.5,343.4 170.5,345.7 171.5,349.3 172.5,339.7 173.5,349.0 174.5,342.5 175.5,337.3 176.5,341.8 177.5,349.5 178.5,340.3 179.5,352.7 180.5,353.4 181.5,350.0 182.5,353.1 183.5,352.9 184.5,349.6 185.5,340.7 186.5,352.7 187.5,352.8 188.5,353.9 189.5,342.8 190.5,342.2 191.5,341.8 192.5,341.0 193.5,344.9 194.5,353.8 195.5,343.8 196.5,344.5 197.5,344.8 198.5,352.7 199.5,345.8 200.5,340.9 201.5,350.6 202.5,340.6 203.5,352.9 204.5,342.1 205.5,344.3 206.5,350.3 207.5,342.1 208.5,344.7 209.5,352.3 210.5,350.7 211.5,340.0 212.5,349.0 213.5,345.2 214.5,342.4 215.5,350.3 216.5,351.0 217.5,342.9 218.5,344.8 219.5,354.0 220.5,351.8 221.5,354.6 222.5,341.9 223.5,336.2 224.5,345.6 225.5,354.4 226.5,342.2 227.5,343.0 228.5,344.6 229.5,353.2 230.5,345.8 231.5,351.9 232.5,342.1 233.5,352.9 234.5,349.2 235.5,345.9 236.5,351.3 237.5,350.8 238.5,352.7 239.5,351.3 240.5,352.9 241.5,355.4 242.5,341.7 243.5,347.9 244.5,342.5 245.5,347.6 246.5,344.4 247.5,351.5 248.5,354.6 249.5,355.3 250.5,346.2 251.5,352.8 252.5,352.7 253.5,343.0 254.5,342.8 255.5,344.6 256.5,353.1 257.5,351.2 258.5,356.0 259.5,346.6 260.5,356.0 261.5,353.1 262.5,348.2 263.5,353.2 264.5,352.3 265.5,343.0 266.5,345.5 267.5,356.1 268.5,346.1 269.5,344.3 270.5,356.3 271.5,343.4 272.5,347.6 273.5,349.0 274.5,348.2 275.5,356.8 276.5,355.4 277.5,356.0 278.5,346.6 279.5,352.0 280.5,346.9 281.5,352.1 282.5,349.6 283.5,347.3 284.5,345.9 285.5,348.9 286.5,351.9 287.5,356.7 288.5,355.6 289.5,354.6 290.5,356.3 291.5,343.8 292.5,354.7 293.5,347.5 294.5,346.8 295.5,343.4 296.5,343.9 297.5,357.0 298.5,356.0 299.5,345.0 300.5,356.2 301.5,355.8 302.5,348.4 303.5,345.3 304.5,344.1 305.5,349.7 306.5,343.1 307.5,344.7 308.5,345.5 309.5,353.1 310.5,349.4 311.5,356.9 312.5,348.7 313.5,345.1 314.5,356.6 315.5,348.6 316.5,356.2 317.5,346.6 318.5,354.9 319.5,350.2 320.5,346.7 321.5,348.2 322.5,354.4 323.5,356.2 324.5,346.5 325.5,355.8 326.5,349.1 327.5,355.5 328.5,348.9 329.5,353.6 330.5,353.5 331.5,356.2 332.5,346.6 333.5,349.5 334.5,341.6 335.5,347.7 336.5,350.8 337.5,352.1 338.5,350.1 339.5,347.4 340.5,354.3 341.5,350.8 342.5,348.1 343.5,353.7 344.5,348.7 345.5,346.4 346.5,346.5 347.5,350.0 348.5,347.6 349.5,355.0 350.5,346.7 351.5,351.8 352.5,350.2 353.5,353.9 354.5,346.5 355.5,348.0 356.5,348.9 357.5,353.8 358.5,350.0 359.5,345.7 360.5,346.0 361.5,349.1 362.5,348.9 363.5,349.2 364.5,346.3 365.5,349.4 366.5,351.3 367.5,353.6 368.5,352.8 369.5,347.5 370.5,353.3 371.5,346.2 372.5,347.0 373.5,347.0 374.5,352.2 375.5,344.9 376.5,344.8 377.5,353.8 378.5,353.4 379.5,353.8 380.5,352.4 381.5,353.9 382.5,352.3 383.5,350.0 384.5,344.9 385.5,352.5 386.5,351.7 387.5,352.0 388.5,353.9 389.5,344.4 390.5,346.9 391.5,344.2 392.5,345.9 393.5,345.9 394.5,351.4 395.5,352.2 396.5,350.9 397.5,343.1 398.5,349.3 399.5,351.5 400.5,347.8 401.5,343.0 402.5,344.7 403.5,342.5 404.5,352.1 405.5,342.1 406.5,349.9 407.5,343.6 408.5,350.1 409.5,342.2 410.5,349.9 411.5,351.2 412.5,347.9 413.5,342.4 414.5,340.1 415.5,344.7 416.5,341.9 417.5,342.6 418.5,346.5 419.5,349.1 420.5,342.1 421.5,342.4 422.5,346.5 423.5,338.5 424.5,338.0 425.5,344.0 426.5,338.1 427.5,338.1 428.5,338.5 429.5,335.8 430.5,332.2 431.5,333.9 432.5,333.2 433.5,337.0 434.5,341.0 435.5,344.6 436.5,339.3 437.5,340.3 438.5,339.2 439.5,345.3 440.5,345.9 441.5,341.4 442.5,339.0 443.5,346.4 444.5,348.4 445.5,346.4 446.5,343.2 447.5,342.6 448.5,347.9 449.5,347.2 450.5,343.0 451.5,348.5 452.5,341.2 453.5,346.6"/><rect x="454" y="295" width="1" height="134" fill="#e8e8e8"/></svg>
<span class="t r" style="right:599.5px;top:126px;font-size:11px;transform:none">50</span>
<span class="t r" style="right:599.5px;top:153px;font-size:11px;transform:none">40</span>
<span class="t r" style="right:599.5px;top:180px;font-size:11px;transform:none">30</span>
<span class="t r" style="right:599.5px;top:206px;font-size:11px;transform:none">20</span>
<span class="t r" style="right:599.5px;top:233px;font-size:11px;transform:none">10</span>
<span class="t" style="left:470px;top:242px;font-size:11px;transform:none">2</span>
<span class="t" style="left:470px;top:225px;font-size:11px;transform:none">4</span>
<span class="t" style="left:470px;top:209px;font-size:11px;transform:none">6</span>
<span class="t" style="left:470px;top:192px;font-size:11px;transform:none">8</span>
<span class="t" style="left:470px;top:175px;font-size:11px;transform:none">10</span>
<span class="t" style="left:470px;top:159px;font-size:11px;transform:none">12</span>
<span class="t" style="left:470px;top:142px;font-size:11px;transform:none">14</span>
<span class="t" style="left:470px;top:125px;font-size:11px;transform:none">16</span>
<span class="t r" style="right:599.5px;top:288px;font-size:11px;transform:none">10</span>
<span class="t r" style="right:599.5px;top:315px;font-size:11px;transform:none">8</span>
<span class="t r" style="right:599.5px;top:342px;font-size:11px;transform:none">6</span>
<span class="t r" style="right:599.5px;top:368px;font-size:11px;transform:none">4</span>
<span class="t r" style="right:599.5px;top:395px;font-size:11px;transform:none">2</span>
<span class="t" style="left:470px;top:394px;font-size:11px;transform:none">4</span>
<span class="t" style="left:470px;top:367px;font-size:11px;transform:none">8</span>
<span class="t" style="left:470px;top:341px;font-size:11px;transform:none">12</span>
<span class="t" style="left:470px;top:314px;font-size:11px;transform:none">16</span>
<span class="t" style="left:470px;top:287px;font-size:11px;transform:none">20</span>
<span class="t" style="left:43px;top:269px;font-size:11px;transform:none">0.0</span>
<span class="t" style="left:43px;top:432px;font-size:11px;transform:none">0.0</span>
<span class="t" style="left:89px;top:269px;font-size:11px;transform:none">0.5</span>
<span class="t" style="left:89px;top:432px;font-size:11px;transform:none">0.5</span>
<span class="t" style="left:135px;top:269px;font-size:11px;transform:none">1.0</span>
<span class="t" style="left:135px;top:432px;font-size:11px;transform:none">1.0</span>
<span class="t" style="left:182px;top:269px;font-size:11px;transform:none">1.5</span>
<span class="t" style="left:182px;top:432px;font-size:11px;transform:none">1.5</span>
<span class="t" style="left:228px;top:269px;font-size:11px;transform:none">2.0</span>
<span class="t" style="left:228px;top:432px;font-size:11px;transform:none">2.0</span>
<span class="t" style="left:275px;top:269px;font-size:11px;transform:none">2.5</span>
<span class="t" style="left:275px;top:432px;font-size:11px;transform:none">2.5</span>
<span class="t" style="left:321px;top:269px;font-size:11px;transform:none">3.0</span>
<span class="t" style="left:321px;top:432px;font-size:11px;transform:none">3.0</span>
<span class="t" style="left:368px;top:269px;font-size:11px;transform:none">3.5</span>
<span class="t" style="left:368px;top:432px;font-size:11px;transform:none">3.5</span>
<span class="t" style="left:414px;top:269px;font-size:11px;transform:none">4.0</span>
<span class="t" style="left:414px;top:432px;font-size:11px;transform:none">4.0</span>
<span class="t" style="left:461px;top:269px;font-size:11px;transform:none">4.5</span>
<span class="t" style="left:461px;top:432px;font-size:11px;transform:none">4.5</span>
<div style="left:492px;top:127px;width:139px;height:84px;box-sizing:border-box;border:1px solid #ffffff"></div>
<div style="left:491px;top:126px;width:139px;height:84px;box-sizing:border-box;border:1px solid #808080"></div>
<div style="left:498px;top:123px;width:45px;height:6px;background:#d4d0c8;"></div>
<span class="t" style="left:500px;top:123px;">Disc info</span>
<span class="t" style="left:500px;top:136px;">Type:</span>
<span class="t" style="left:546px;top:136px;color:#000080">DVD+R</span>
<span class="t" style="left:500px;top:154px;">ID:</span>
<span class="t" style="left:546px;top:154px;color:#000080">MCC 004</span>
<span class="t" style="left:500px;top:171px;">Date:</span>
<span class="t" style="left:546px;top:171px;color:#000080">n/a</span>
<span class="t" style="left:500px;top:189px;">Label:</span>
<span class="t" style="left:546px;top:189px;color:#000080">n/a</span>
<div style="left:492px;top:218px;width:139px;height:203px;box-sizing:border-box;border:1px solid #ffffff"></div>
<div style="left:491px;top:217px;width:139px;height:203px;box-sizing:border-box;border:1px solid #808080"></div>
<div style="left:498px;top:214px;width:42px;height:6px;background:#d4d0c8;"></div>
<span class="t" style="left:500px;top:214px;">Settings</span>
<span class="t" style="left:500px;top:228px;">Speed:</span>
<div style="left:500px;top:242px;width:84px;height:21px;background:#ffffff;border:1px solid;border-color:#808080 #ffffff #ffffff #808080;box-shadow:inset 1px 1px #404040, inset -1px -1px #d4d0c8;"></div>
<span class="t" style="left:504px;top:248px;">8&thinsp;X</span>
<div style="left:566px;top:244px;width:16px;height:17px;background:#d4d0c8;border:1px solid;border-color:#ffffff #404040 #404040 #ffffff;box-shadow:inset -1px -1px #808080;"></div>
<svg style="left:566px;top:245px" width="16" height="16" shape-rendering="crispEdges"><path d="M4 6h7v1h-1v1h-1v1h-1v1h-1v-1h-1v-1h-1v-1h-1z" fill="#000"/></svg>
<div style="left:592px;top:240px;width:23px;height:23px;background:#d4d0c8;border:1px solid;border-color:#ffffff #404040 #404040 #ffffff;box-shadow:inset -1px -1px #808080;"></div>
<svg style="left:592px;top:240px" width="23" height="23" viewBox="0 0 23 23">
<rect x="4.5" y="3.5" width="14" height="15" fill="#fff" stroke="#000" stroke-width="1" shape-rendering="crispEdges"/>
<path d="M8 12 V8.5 H12.5" fill="none" stroke="#008a00" stroke-width="1.4"/><path d="M12 6 L15 8.5 L12 11 Z" fill="#008a00"/>
<path d="M15 10 V14.5 H10.5" fill="none" stroke="#008a00" stroke-width="1.4"/><path d="M11 12 L8 14.5 L11 17 Z" fill="#008a00"/>
</svg>
<span class="t" style="left:503px;top:274px;">Start:</span>
<div style="left:554px;top:268px;width:60px;height:20px;background:#ffffff;border:1px solid;border-color:#808080 #ffffff #ffffff #808080;box-shadow:inset 1px 1px #404040, inset -1px -1px #d4d0c8;"></div>
<span class="t" style="left:558px;top:273px;">0000 MB</span>
<span class="t" style="left:503px;top:297px;">End:</span>
<div style="left:554px;top:291px;width:60px;height:20px;background:#ffffff;border:1px solid;border-color:#808080 #ffffff #ffffff #808080;box-shadow:inset 1px 1px #404040, inset -1px -1px #d4d0c8;"></div>
<span class="t" style="left:558px;top:296px;">4480 MB</span>
<div style="left:502px;top:316px;width:13px;height:13px;background:#ffffff;border:1px solid;border-color:#808080 #ffffff #ffffff #808080;box-shadow:inset 1px 1px #404040, inset -1px -1px #d4d0c8;"></div>
<span class="t" style="left:520px;top:317px;">Quick scan</span>
<div style="left:502px;top:337px;width:13px;height:13px;background:#ffffff;border:1px solid;border-color:#808080 #ffffff #ffffff #808080;box-shadow:inset 1px 1px #404040, inset -1px -1px #d4d0c8;"></div>
<svg style="left:502px;top:337px" width="13" height="13" shape-rendering="crispEdges"><g fill="#000"><rect x="9" y="3" width="1" height="1"/><rect x="8" y="4" width="1" height="1"/><rect x="9" y="4" width="1" height="1"/><rect x="3" y="5" width="1" height="1"/><rect x="7" y="5" width="1" height="1"/><rect x="8" y="5" width="1" height="1"/><rect x="9" y="5" width="1" height="1"/><rect x="3" y="6" width="1" height="1"/><rect x="4" y="6" width="1" height="1"/><rect x="6" y="6" width="1" height="1"/><rect x="7" y="6" width="1" height="1"/><rect x="8" y="6" width="1" height="1"/><rect x="3" y="7" width="1" height="1"/><rect x="4" y="7" width="1" height="1"/><rect x="5" y="7" width="1" height="1"/><rect x="6" y="7" width="1" height="1"/><rect x="7" y="7" width="1" height="1"/><rect x="4" y="8" width="1" height="1"/><rect x="5" y="8" width="1" height="1"/><rect x="6" y="8" width="1" height="1"/><rect x="5" y="9" width="1" height="1"/></g></svg>
<span class="t" style="left:520px;top:338px;">Show C1/PIE</span>
<div style="left:502px;top:353px;width:13px;height:13px;background:#ffffff;border:1px solid;border-color:#808080 #ffffff #ffffff #808080;box-shadow:inset 1px 1px #404040, inset -1px -1px #d4d0c8;"></div>
<svg style="left:502px;top:353px" width="13" height="13" shape-rendering="crispEdges"><g fill="#000"><rect x="9" y="3" width="1" height="1"/><rect x="8" y="4" width="1" height="1"/><rect x="9" y="4" width="1" height="1"/><rect x="3" y="5" width="1" height="1"/><rect x="7" y="5" width="1" height="1"/><rect x="8" y="5" width="1" height="1"/><rect x="9" y="5" width="1" height="1"/><rect x="3" y="6" width="1" height="1"/><rect x="4" y="6" width="1" height="1"/><rect x="6" y="6" width="1" height="1"/><rect x="7" y="6" width="1" height="1"/><rect x="8" y="6" width="1" height="1"/><rect x="3" y="7" width="1" height="1"/><rect x="4" y="7" width="1" height="1"/><rect x="5" y="7" width="1" height="1"/><rect x="6" y="7" width="1" height="1"/><rect x="7" y="7" width="1" height="1"/><rect x="4" y="8" width="1" height="1"/><rect x="5" y="8" width="1" height="1"/><rect x="6" y="8" width="1" height="1"/><rect x="5" y="9" width="1" height="1"/></g></svg>
<span class="t" style="left:520px;top:354px;">Show C2/PIF</span>
<div style="left:502px;top:370px;width:13px;height:13px;background:#ffffff;border:1px solid;border-color:#808080 #ffffff #ffffff #808080;box-shadow:inset 1px 1px #404040, inset -1px -1px #d4d0c8;"></div>
<svg style="left:502px;top:370px" width="13" height="13" shape-rendering="crispEdges"><g fill="#000"><rect x="9" y="3" width="1" height="1"/><rect x="8" y="4" width="1" height="1"/><rect x="9" y="4" width="1" height="1"/><rect x="3" y="5" width="1" height="1"/><rect x="7" y="5" width="1" height="1"/><rect x="8" y="5" width="1" height="1"/><rect x="9" y="5" width="1" height="1"/><rect x="3" y="6" width="1" height="1"/><rect x="4" y="6" width="1" height="1"/><rect x="6" y="6" width="1" height="1"/><rect x="7" y="6" width="1" height="1"/><rect x="8" y="6" width="1" height="1"/><rect x="3" y="7" width="1" height="1"/><rect x="4" y="7" width="1" height="1"/><rect x="5" y="7" width="1" height="1"/><rect x="6" y="7" width="1" height="1"/><rect x="7" y="7" width="1" height="1"/><rect x="4" y="8" width="1" height="1"/><rect x="5" y="8" width="1" height="1"/><rect x="6" y="8" width="1" height="1"/><rect x="5" y="9" width="1" height="1"/></g></svg>
<span class="t" style="left:520px;top:371px;">Show jitter</span>
<div style="left:502px;top:386px;width:13px;height:13px;background:#ffffff;border:1px solid;border-color:#808080 #ffffff #ffffff #808080;box-shadow:inset 1px 1px #404040, inset -1px -1px #d4d0c8;"></div>
<svg style="left:502px;top:386px" width="13" height="13" shape-rendering="crispEdges"><g fill="#000"><rect x="9" y="3" width="1" height="1"/><rect x="8" y="4" width="1" height="1"/><rect x="9" y="4" width="1" height="1"/><rect x="3" y="5" width="1" height="1"/><rect x="7" y="5" width="1" height="1"/><rect x="8" y="5" width="1" height="1"/><rect x="9" y="5" width="1" height="1"/><rect x="3" y="6" width="1" height="1"/><rect x="4" y="6" width="1" height="1"/><rect x="6" y="6" width="1" height="1"/><rect x="7" y="6" width="1" height="1"/><rect x="8" y="6" width="1" height="1"/><rect x="3" y="7" width="1" height="1"/><rect x="4" y="7" width="1" height="1"/><rect x="5" y="7" width="1" height="1"/><rect x="6" y="7" width="1" height="1"/><rect x="7" y="7" width="1" height="1"/><rect x="4" y="8" width="1" height="1"/><rect x="5" y="8" width="1" height="1"/><rect x="6" y="8" width="1" height="1"/><rect x="5" y="9" width="1" height="1"/></g></svg>
<span class="t" style="left:520px;top:387px;">Show read speed</span>
<div style="left:502px;top:402px;width:13px;height:13px;background:#d4d0c8;border:1px solid;border-color:#808080 #ffffff #ffffff #808080;box-shadow:inset 1px 1px #404040, inset -1px -1px #d4d0c8;"></div>
<svg style="left:502px;top:402px" width="13" height="13" shape-rendering="crispEdges"><g fill="#808080"><rect x="9" y="3" width="1" height="1"/><rect x="8" y="4" width="1" height="1"/><rect x="9" y="4" width="1" height="1"/><rect x="3" y="5" width="1" height="1"/><rect x="7" y="5" width="1" height="1"/><rect x="8" y="5" width="1" height="1"/><rect x="9" y="5" width="1" height="1"/><rect x="3" y="6" width="1" height="1"/><rect x="4" y="6" width="1" height="1"/><rect x="6" y="6" width="1" height="1"/><rect x="7" y="6" width="1" height="1"/><rect x="8" y="6" width="1" height="1"/><rect x="3" y="7" width="1" height="1"/><rect x="4" y="7" width="1" height="1"/><rect x="5" y="7" width="1" height="1"/><rect x="6" y="7" width="1" height="1"/><rect x="7" y="7" width="1" height="1"/><rect x="4" y="8" width="1" height="1"/><rect x="5" y="8" width="1" height="1"/><rect x="6" y="8" width="1" height="1"/><rect x="5" y="9" width="1" height="1"/></g></svg>
<span class="t" style="left:521px;top:404px;color:#fff">Show write speed</span>
<span class="t" style="left:520px;top:403px;color:#808080">Show write speed</span>
<div style="left:492px;top:428px;width:139px;height:26px;box-sizing:border-box;border:1px solid #ffffff"></div>
<div style="left:491px;top:427px;width:139px;height:26px;box-sizing:border-box;border:1px solid #808080"></div>
<span class="t" style="left:502px;top:435px;">Quality score:</span>
<span class="t r" style="right:20px;top:435px;color:#000080">96</span>
<div style="left:492px;top:460px;width:139px;height:56px;box-sizing:border-box;border:1px solid #ffffff"></div>
<div style="left:491px;top:459px;width:139px;height:56px;box-sizing:border-box;border:1px solid #808080"></div>
<span class="t" style="left:502px;top:470px;">Progress:</span>
<span class="t r" style="right:20px;top:470px;color:#000080">100 %</span>
<span class="t" style="left:502px;top:485px;">Position:</span>
<span class="t r" style="right:20px;top:485px;color:#000080">4479 MB</span>
<span class="t" style="left:502px;top:500px;">Speed:</span>
<span class="t r" style="right:20px;top:500px;color:#000080">8.35 X</span>
<div style="left:15px;top:460px;width:147px;height:56px;box-sizing:border-box;border:1px solid #ffffff"></div>
<div style="left:14px;top:459px;width:147px;height:56px;box-sizing:border-box;border:1px solid #808080"></div>
<div style="left:22px;top:456px;width:56px;height:6px;background:#d4d0c8;"></div>
<div style="left:24px;top:457px;width:8px;height:8px;box-sizing:border-box;background:#00ffff;border:1px solid #000"></div>
<span class="t" style="left:36px;top:455px;">PI Errors</span>
<span class="t" style="left:22px;top:470px;">Average:</span>
<span class="t r" style="right:491px;top:470px;color:#000080">5.17</span>
<span class="t" style="left:22px;top:485px;">Maximum:</span>
<span class="t r" style="right:491px;top:485px;color:#000080">31</span>
<span class="t" style="left:22px;top:500px;">Total:</span>
<span class="t r" style="right:491px;top:500px;color:#000080">60302</span>
<div style="left:173px;top:460px;width:147px;height:56px;box-sizing:border-box;border:1px solid #ffffff"></div>
<div style="left:172px;top:459px;width:147px;height:56px;box-sizing:border-box;border:1px solid #808080"></div>
<div style="left:181px;top:456px;width:64px;height:6px;background:#d4d0c8;"></div>
<div style="left:182px;top:457px;width:8px;height:8px;box-sizing:border-box;background:#ffff00;border:1px solid #000"></div>
<span class="t" style="left:193px;top:455px;">PI Failures</span>
<span class="t" style="left:181px;top:470px;">Average:</span>
<span class="t r" style="right:332px;top:470px;color:#000080">0.07</span>
<span class="t" style="left:181px;top:485px;">Maximum:</span>
<span class="t r" style="right:332px;top:485px;color:#000080">7</span>
<span class="t" style="left:181px;top:500px;">Total:</span>
<span class="t r" style="right:332px;top:500px;color:#000080">605</span>
<div style="left:332px;top:460px;width:148px;height:43px;box-sizing:border-box;border:1px solid #ffffff"></div>
<div style="left:331px;top:459px;width:148px;height:43px;box-sizing:border-box;border:1px solid #808080"></div>
<div style="left:340px;top:456px;width:36px;height:6px;background:#d4d0c8;"></div>
<div style="left:342px;top:457px;width:8px;height:8px;box-sizing:border-box;background:#ff00ff;border:1px solid #000"></div>
<span class="t" style="left:352px;top:455px;">Jitter</span>
<span class="t" style="left:340px;top:470px;">Average:</span>
<span class="t r" style="right:173px;top:470px;color:#000080">11.52 %</span>
<span class="t" style="left:340px;top:485px;">Maximum:</span>
<span class="t r" style="right:173px;top:485px;color:#000080">17.4 %</span>
<span class="t" style="left:341px;top:504px;">PO failures:</span>
<span class="t r" style="right:173px;top:504px;color:#000080">0</span>
</body></html>
